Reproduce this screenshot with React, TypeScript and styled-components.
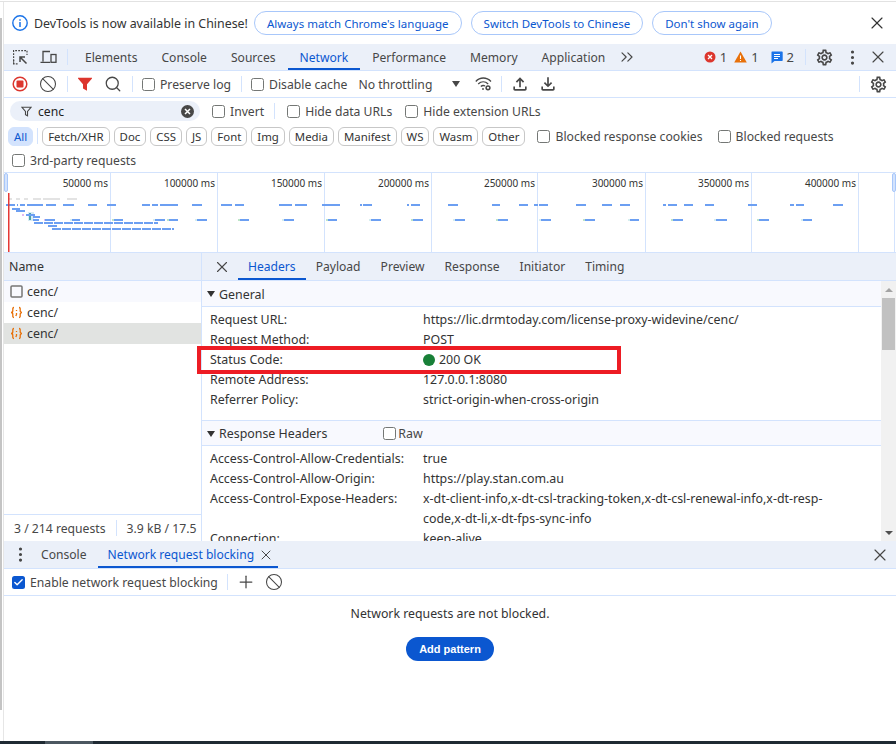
import React from 'react'
import styled, { createGlobalStyle } from 'styled-components'
import { X, Plus, Search, Ban, ChevronsRight, EllipsisVertical, Check } from 'lucide-react'
import { MdOutlineSettings, MdOutlineFileUpload, MdOutlineFileDownload } from 'react-icons/md'

const GlobalStyle = createGlobalStyle`
  html, body {
    margin: 0;
    padding: 0;
    background: #fff;
  }
  body {
    font-family: 'Noto Sans', 'Open Sans', sans-serif;
    font-size: 12px;
    color: #474747;
    overflow: hidden;
  }
`

const Page = styled.div`
  position: relative;
  width: 896px;
  height: 744px;
  display: flex;
  flex-direction: column;
  overflow: hidden;
  background: #fff;

  &::before {
    content: '';
    position: absolute;
    left: 0;
    top: 18px;
    width: 1.5px;
    height: 692px;
    background: #c4c4c4;
  }
`

const Frame = styled.div`
  flex: 1;
  min-height: 0;
  margin-top: 1px;
  padding-left: 3px;
  border-top: 1px solid #e2e2e2;
  display: flex;
  flex-direction: column;
`

const Content = styled.div`
  flex: 1;
  min-height: 0;
  display: flex;
  flex-direction: column;
  border-left: 1px solid #e6e6e6;
`

const BottomStrip = styled.div`
  height: 3px;
  flex: none;
  background: linear-gradient(to right, #1f2a33 45px, #4b5760 45px, #4b5760 93px, #1f2a33 93px);
`

const Infobar = styled.div`
  height: 42px;
  flex: none;
  display: flex;
  align-items: center;
  gap: 9px;
  padding: 0 9px 0 8px;
  box-sizing: border-box;
  font-size: 12.4px;
  color: #333;
`

const InfoText = styled.span`
  margin-left: -3px;
  width: 211px;
  white-space: nowrap;
`

const PillButton = styled.button`
  height: 24px;
  padding: 0 12px;
  border: 1px solid #a8c7fa;
  border-radius: 12px;
  background: #fff;
  color: #0b57d0;
  font: inherit;
  font-size: 11.5px;
  white-space: nowrap;
`

const CloseSlot = styled.span`
  margin-left: auto;
  display: flex;
  color: #333;
`

const TabBar = styled.div<{ $height?: number }>`
  height: ${(p) => p.$height ?? 27}px;
  flex: none;
  box-sizing: border-box;
  display: flex;
  align-items: stretch;
  padding-left: 2px;
  background: #ebf0f9;
  border-bottom: 1px solid #d3e3fd;
  font-size: 12.1px;
`

const Tab = styled.div<{ $active?: boolean; $pad?: string; $left?: number }>`
  margin-left: ${(p) => p.$left ?? 0}px;
  display: flex;
  align-items: center;
  white-space: nowrap;
  padding: ${(p) => p.$pad ?? '0 12px'};
  color: ${(p) => (p.$active ? '#0b57d0' : '#474747')};
  box-shadow: ${(p) => (p.$active ? 'inset 0 -2px 0 #0b57d0' : 'none')};
`

const IconSlot = styled.span<{ $width?: number; $left?: number; $color?: string }>`
  display: flex;
  align-items: center;
  justify-content: center;
  width: ${(p) => p.$width ?? 28}px;
  margin-left: ${(p) => p.$left ?? 0}px;
  color: ${(p) => p.$color ?? '#474747'};
  flex: none;
`

const Divider = styled.span<{ $left?: number; $right?: number; $auto?: boolean }>`
  width: 1px;
  height: 16px;
  align-self: center;
  flex: none;
  background: #d3e3fd;
  margin-left: ${(p) => (p.$auto ? 'auto' : `${p.$left ?? 0}px`)};
  margin-right: ${(p) => p.$right ?? 0}px;
`

const CountGroup = styled.div`
  margin-left: auto;
  display: flex;
  align-items: center;
  font-size: 13px;
`

const Badge = styled.span<{ $left?: number }>`
  display: flex;
  margin-left: ${(p) => p.$left ?? 0}px;
`

const Count = styled.span`
  margin-left: 4px;
`

const RightActions = styled.div`
  display: flex;
  align-items: stretch;
  padding-right: 4px;
`

const Toolbar = styled.div<{ $height?: number }>`
  height: ${(p) => p.$height ?? 27}px;
  flex: none;
  box-sizing: border-box;
  display: flex;
  align-items: center;
  padding: 0 4px 0 2px;
  border-bottom: 1px solid #d3e3fd;
  font-size: 12.2px;
  white-space: nowrap;
`

const Box = styled.span<{ $on?: boolean }>`
  width: 13px;
  height: 13px;
  box-sizing: border-box;
  flex: none;
  display: inline-flex;
  align-items: center;
  justify-content: center;
  border: ${(p) => (p.$on ? 'none' : '1px solid #747775')};
  border-radius: 2.5px;
  background: ${(p) => (p.$on ? '#0b57d0' : '#fff')};
  color: #fff;
`

const CheckLabel = styled.label<{ $left?: number }>`
  display: inline-flex;
  align-items: center;
  gap: 5px;
  margin-left: ${(p) => p.$left ?? 0}px;
  color: #474747;
`

const FilterInput = styled.div`
  width: 190px;
  height: 20px;
  margin-left: 6px;
  padding: 0 6px 0 11px;
  box-sizing: border-box;
  display: flex;
  align-items: center;
  gap: 6px;
  background: #ebf0f9;
  border-radius: 10px;
  color: #1f1f1f;
`

const ClearDot = styled.span`
  margin-left: auto;
  display: flex;
`

const FilterBlock = styled.div`
  flex: none;
  height: 75px;
  box-sizing: border-box;
  padding-top: 2px;
  display: flex;
  flex-direction: column;
  border-bottom: 1px solid #d3e3fd;
  font-size: 12.2px;
  white-space: nowrap;
`

const FilterRow = styled.div<{ $height: number; $left?: number; $bottom?: number }>`
  height: ${(p) => p.$height}px;
  flex: none;
  display: flex;
  align-items: center;
  padding-left: ${(p) => p.$left ?? 0}px;
  margin-bottom: ${(p) => p.$bottom ?? 0}px;
`

const Chip = styled.span<{ $active?: boolean }>`
  height: 19px;
  padding: 0 5px;
  box-sizing: border-box;
  display: inline-flex;
  align-items: center;
  margin-right: 4px;
  border-radius: 6px;
  font-size: 11.4px;
  border: 1px solid ${(p) => (p.$active ? '#d3e3fd' : '#c7c7c7')};
  background: ${(p) => (p.$active ? '#d3e3fd' : '#fff')};
  color: ${(p) => (p.$active ? '#0b57d0' : '#333')};
`

const Overview = styled.div`
  height: 80px;
  flex: none;
  box-sizing: border-box;
  border-bottom: 1px solid #d3e3fd;
  position: relative;
`

const Split = styled.div`
  height: 288px;
  flex: none;
  display: flex;
  overflow: hidden;
`

const NamePane = styled.div`
  width: 198px;
  flex: none;
  box-sizing: border-box;
  border-right: 1px solid #d3e3fd;
  display: flex;
  flex-direction: column;
`

const NameHeader = styled.div`
  height: 28px;
  flex: none;
  box-sizing: border-box;
  padding-left: 5px;
  display: flex;
  align-items: center;
  background: #ebf0f9;
  border-bottom: 1px solid #d3e3fd;
  font-size: 12.4px;
  color: #333;
`

const NameRow = styled.div<{ $bg: string }>`
  height: 21px;
  flex: none;
  display: flex;
  align-items: center;
  gap: 4px;
  padding-left: 6px;
  font-size: 12.4px;
  color: #333;
  background: ${(p) => p.$bg};
`

const NameSpacer = styled.div`
  flex: 1;
`

const NameFooter = styled.div`
  height: 27px;
  flex: none;
  box-sizing: border-box;
  display: flex;
  align-items: center;
  padding-left: 10px;
  border-top: 1px solid #d3e3fd;
  font-size: 12.2px;
  white-space: nowrap;
  overflow: hidden;
`

const DetailPane = styled.div`
  flex: 1;
  min-width: 0;
  display: flex;
  flex-direction: column;
`

const DetailBody = styled.div`
  flex: 1;
  min-height: 0;
  display: flex;
`

const Sections = styled.div`
  flex: 1;
  min-width: 0;
`

const SectionHeader = styled.div<{ $topLine?: boolean }>`
  height: 26px;
  box-sizing: border-box;
  display: flex;
  align-items: center;
  padding: 1px 0 0 5px;
  gap: 4px;
  background: #f8f9fe;
  border-bottom: 1px solid #d3e3fd;
  border-top: ${(p) => (p.$topLine ? '1px solid #d3e3fd' : 'none')};
  font-size: 12.4px;
  color: #333;
`

const Caret = styled.span`
  width: 0;
  height: 0;
  border-left: 4px solid transparent;
  border-right: 4px solid transparent;
  border-top: 6px solid #333;
`

const ThrottleCaret = styled(Caret)`
  margin-left: 20px;
  border-top-color: #474747;
`

const SectionBody = styled.div<{ $pad: string }>`
  padding: ${(p) => p.$pad};
`

const KV = styled.div`
  position: relative;
  display: grid;
  grid-template-columns: 213px 1fr;
  min-height: 20px;
  line-height: 20px;
  padding: 0 42px 0 8px;
  font-size: 12.4px;
  color: #333;
`

const KVValue = styled.span`
  word-break: break-word;
`

const StatusDot = styled.span`
  display: inline-block;
  width: 12px;
  height: 12px;
  margin-right: 4px;
  vertical-align: -1.5px;
  border-radius: 50%;
  background: #188038;
`

const Highlight = styled.div`
  position: absolute;
  left: -5px;
  width: 424px;
  top: -4px;
  height: 28px;
  box-sizing: border-box;
  border: 4.5px solid #ed1c24;
`

const RawCheck = styled.label`
  display: inline-flex;
  align-items: center;
  gap: 2px;
  margin-left: 52px;
  color: #474747;
`

const Scrollbar = styled.div`
  width: 15px;
  flex: none;
  display: flex;
  flex-direction: column;
  background: #f1f1f1;
`

const ScrollArrow = styled.div<{ $down?: boolean }>`
  height: 17px;
  flex: none;
  display: flex;
  align-items: center;
  justify-content: center;
  &::before {
    content: '';
    border-left: 4px solid transparent;
    border-right: 4px solid transparent;
    ${(p) => (p.$down ? 'border-top: 4px solid #505050;' : 'border-bottom: 4px solid #a3a3a3;')}
  }
`

const ScrollThumb = styled.div`
  height: 52px;
  flex: none;
  margin: 0 1px;
  background: #c1c1c1;
`

const ScrollTrack = styled.div`
  flex: 1;
`

const BlockingToolbar = styled(Toolbar)`
  padding-left: 8px;
`

const DrawerClose = styled(IconSlot)`
  margin-left: auto;
  margin-right: 2px;
`

const Empty = styled.div`
  flex: 1;
  min-height: 0;
  display: flex;
  flex-direction: column;
  align-items: center;
  padding-top: 9px;
  gap: 15px;
  font-size: 12.3px;
  color: #333;
`

const PrimaryButton = styled.button`
  width: 88px;
  height: 24px;
  border: none;
  border-radius: 12px;
  background: #0b57d0;
  color: #fff;
  font-family: 'Liberation Sans', Arial, sans-serif;
  font-size: 11px;
  font-weight: 700;
  padding: 0;
`

const InspectIcon = () => (
  <svg width="15" height="15" viewBox="0 0 15 15" fill="none" stroke="#474747" strokeWidth="1.2">
    <path d="M.6 14V.6H14V5" strokeDasharray="1.8 1.2" />
    <path d="M.6 10v3.800H5" strokeDasharray="1.8 1.2" />
    <path d="M13.500 13.500 7.500 7.500M7 12V7h5" strokeWidth="1.5" />
  </svg>
)

const DeviceIcon = () => (
  <svg width="17" height="14" viewBox="0 0 17 14" fill="none" stroke="#474747" strokeWidth="1.3">
    <path d="M10 1.500H3v10M.5 12.300H10" />
    <rect x="11" y="4.500" width="5" height="7.800" />
  </svg>
)

const RecordIcon = () => (
  <svg width="16" height="16" viewBox="0 0 16 16">
    <circle cx="8" cy="8" r="6.800" fill="none" stroke="#dc362e" strokeWidth="1.500" />
    <rect x="4.500" y="4.500" width="7" height="7" rx="1" fill="#dc362e" />
  </svg>
)

const FunnelIcon = ({ color, fill, size }: { color: string; fill: boolean; size: number }) => (
  <svg width={size} height={size} viewBox="0 0 14 14" fill={fill ? color : 'none'} stroke={color} strokeWidth="1.400">
    <path d="M1 1.500h12L8.300 7v5.500L5.700 11V7z" />
  </svg>
)

const WifiGearIcon = () => (
  <svg width="17" height="14" viewBox="0 0 17 14" fill="none" stroke="#474747" strokeWidth="1.300">
    <path d="M.8 4.500C5-.2 11.500-.2 16 4.500M3.200 7c3-2.800 7-2.800 10 0M5.800 9.500c1.300-1.100 3-1.200 4.300-.5" />
    <circle cx="13" cy="10.800" r="1.900" strokeWidth="1.500" />
    <circle cx="8" cy="12" r=".9" fill="#474747" stroke="none" />
  </svg>
)

const ErrorIcon = () => (
  <svg width="12" height="12" viewBox="0 0 12 12">
    <circle cx="6" cy="6" r="5.500" fill="#dc362e" />
    <path d="M4 4l4 4M8 4l-4 4" stroke="#fff" strokeWidth="1.300" />
  </svg>
)

const WarnIcon = () => (
  <svg width="13" height="12" viewBox="0 0 13 12">
    <path d="M6.500.5 12.800 11.500H.2z" fill="#e8710a" />
    <path d="M6.500 4.500v3.500M6.500 9v1" stroke="#fff" strokeWidth="1.100" />
  </svg>
)

const MessageIcon = () => (
  <svg width="12" height="13" viewBox="0 0 12 13">
    <path d="M1 .5h10a.7.7 0 0 1 .7.7v8a.7.7 0 0 1-.7.7H3.500L.5 12.500V1.200A.7.7 0 0 1 1 .5z" fill="#1a73e8" />
    <path d="M3 3.500h6M3 5.500h6M3 7.500h4" stroke="#fff" strokeWidth="1" />
  </svg>
)

const InfoIcon = () => (
  <svg width="16" height="16" viewBox="0 0 16 16">
    <circle cx="8" cy="8" r="7.200" fill="none" stroke="#1a73e8" strokeWidth="1.400" />
    <path d="M8 7v5M8 4.200v1.500" stroke="#1a73e8" strokeWidth="1.500" />
  </svg>
)

const ClearIcon = () => (
  <svg width="13" height="13" viewBox="0 0 13 13">
    <circle cx="6.500" cy="6.500" r="6.500" fill="#474747" />
    <path d="M4 4l5 5M9 4l-5 5" stroke="#fff" strokeWidth="1.500" />
  </svg>
)

const JsonIcon = () => (
  <svg width="13" height="13" viewBox="0 0 13 13" fill="none" stroke="#e8710a" strokeWidth="1.300">
    <path d="M4 1.500C2.500 1.500 2.800 3 2.800 4.500S2.500 6.500 1 6.500c1.500 0 1.800.5 1.800 2s-.3 3 1.200 3" />
    <path d="M9 1.500c1.500 0 1.200 1.500 1.200 3s.3 2 1.800 2c-1.500 0-1.800.5-1.800 2s.3 3-1.200 3" />
    <path d="M6.500 4v1M6.500 7v1.500L5.800 10" />
  </svg>
)

const DocIcon = () => (
  <svg width="13" height="13" viewBox="0 0 13 13" fill="none" stroke="#757575" strokeWidth="1.500">
    <rect x="1" y="1" width="11" height="11" rx="1" />
  </svg>
)

const gridLines = [110, 217, 324, 431, 537, 645, 751, 858]
const gridLabels = ['50000', '100000', '150000', '200000', '250000', '300000', '350000', '400000']

// waterfall bars: [row y, from x, to x]
const bars: [number, number, number][] = [
  [25, 6, 15], [25, 17, 18], [25, 20, 25], [25, 27, 43], [25, 46, 56], [25, 63, 74], [25, 88, 97],
  [25, 107, 116], [25, 142, 150], [25, 152, 158], [25, 160, 178], [25, 192, 202], [25, 221, 232], [25, 235, 244],
  [25, 279, 292], [25, 295, 307], [25, 322, 340], [25, 360, 362], [25, 363, 372], [25, 407, 409], [25, 411, 420],
  [25, 448, 458], [25, 492, 500], [25, 519, 528], [25, 534, 538], [25, 539, 548], [25, 576, 586],
  [25, 602, 612], [25, 620, 630], [25, 663, 666], [25, 668, 677], [25, 684, 693], [25, 705, 714],
  [25, 748, 757], [25, 790, 794], [25, 796, 804], [25, 833, 843],
  [29, 12, 20], [31, 16, 25], [35, 26, 35], [37, 33, 40],
  [40, 33, 39], [40, 45, 55], [40, 72, 80], [40, 114, 123], [40, 155, 165], [40, 169, 178], [40, 197, 207],
  [40, 240, 249], [40, 284, 294], [40, 328, 337], [40, 371, 381], [40, 413, 423], [40, 455, 465], [40, 498, 508],
  [40, 541, 551], [40, 585, 595], [40, 630, 639], [40, 673, 683], [40, 716, 727], [40, 759, 769], [40, 803, 812],
  [46, 48, 57],
]

const longBars: [number, number, number][] = [
  [43, 34, 158],
  [49, 52, 174],
]

const greyBars: [number, number][] = [[8, 12], [16, 20], [24, 28], [33, 41], [43, 60], [67, 77]]

const OverviewChart = () => (
  <svg width="892" height="79" viewBox="0 0 892 79">
    {gridLines.map((x) => (
      <line key={x} x1={x - 3.5} x2={x - 3.5} y1="0" y2="79" stroke="#d3e3fd" />
    ))}
    {greyBars.map(([a, b]) => (
      <rect key={a} x={a - 4} y="25" width={b - a} height="2" fill="#e3e3e3" />
    ))}
    <rect x="24" y="39" width="6" height="9" fill="#d8ecf5" />
    <rect x="25" y="40" width="2" height="7" fill="#4aa3a8" />
    <rect x="18" y="41" width="2" height="2" fill="#e3b8f0" />
    <rect x="40" y="46" width="2" height="2" fill="#e3b8f0" />
    {bars.map(([y, a, b], i) => (
      <rect key={i} x={a - 4} y={y + 6} width={b - a} height="2" fill="#6c9ff2" />
    ))}
    {bars
      .filter(([y, a]) => y === 40 && a > 60)
      .map(([, a], i) => (
        <rect key={a} x={a - 6} y="46" width="2" height="2" fill={i % 2 ? '#bde5c8' : '#d5eef0'} />
      ))}
    {longBars.map(([y, a, b]) => (
      <line key={y} x1={a - 4} x2={b - 4} y1={y + 7} y2={y + 7} stroke="#6c9ff2" strokeWidth="2" strokeDasharray="9 1" />
    ))}
    <rect x="4" y="20" width="1.500" height="59" fill="#e53935" />
    <rect x="890" y="0" width="1" height="79" fill="#d3e3fd" />
  </svg>
)

const AxisLabels = styled.div`
  position: absolute;
  top: 2px;
  left: 0;
  right: 0;
  font-size: 10px;
  color: #333;
`

const AxisLabel = styled.span<{ $right: number }>`
  position: absolute;
  right: ${(p) => p.$right}px;
  line-height: 16px;
  white-space: nowrap;
`

const Handle = styled.div<{ $side: 'left' | 'right' }>`
  position: absolute;
  top: 0;
  ${(p) => p.$side}: 0;
  width: 4px;
  height: 19px;
  background: #d3e3fd;
  border: 1px solid #a8c7fa;
  box-sizing: border-box;
  border-radius: 2px;
`

const filters = ['Fetch/XHR', 'Doc', 'CSS', 'JS', 'Font', 'Img', 'Media', 'Manifest', 'WS', 'Wasm', 'Other']

const detailTabs = ['Payload', 'Preview', 'Response', 'Initiator', 'Timing']

const App: React.FC = () => {
  return (
    <Page>
      <GlobalStyle />
      <Frame>
        <Content>
          <Infobar>
            <InfoIcon />
            <InfoText>DevTools is now available in Chinese!</InfoText>
            <PillButton>Always match Chrome's language</PillButton>
            <PillButton>Switch DevTools to Chinese</PillButton>
            <PillButton>Don't show again</PillButton>
            <CloseSlot>
              <X size={20} strokeWidth={1.4} />
            </CloseSlot>
          </Infobar>

          <TabBar>
            <IconSlot>
              <InspectIcon />
            </IconSlot>
            <IconSlot>
              <DeviceIcon />
            </IconSlot>
            <Divider $left={5} />
            <Tab $left={5}>Elements</Tab>
            <Tab>Console</Tab>
            <Tab>Sources</Tab>
            <Tab $active>Network</Tab>
            <Tab>Performance</Tab>
            <Tab>Memory</Tab>
            <Tab>Application</Tab>
            <IconSlot $width={20}>
              <ChevronsRight size={24} strokeWidth={1.4} />
            </IconSlot>
            <CountGroup>
              <ErrorIcon />
              <Count>1</Count>
              <Badge $left={7}>
                <WarnIcon />
              </Badge>
              <Count>1</Count>
              <Badge $left={12}>
                <MessageIcon />
              </Badge>
              <Count>2</Count>
            </CountGroup>
            <Divider $left={11} $right={4} />
            <RightActions>
              <IconSlot>
                <MdOutlineSettings size={19} />
              </IconSlot>
              <IconSlot>
                <EllipsisVertical size={19} strokeWidth={2} />
              </IconSlot>
              <IconSlot $left={-2}>
                <X size={20} strokeWidth={1.4} />
              </IconSlot>
            </RightActions>
          </TabBar>

          <Toolbar>
            <IconSlot>
              <RecordIcon />
            </IconSlot>
            <IconSlot>
              <Ban size={18} strokeWidth={1.4} />
            </IconSlot>
            <Divider $left={5} $right={3} />
            <IconSlot>
              <FunnelIcon color="#dc362e" fill size={14} />
            </IconSlot>
            <IconSlot>
              <Search size={18} strokeWidth={1.7} />
            </IconSlot>
            <Divider $left={5} />
            <CheckLabel $left={9}>
              <Box />
              Preserve log
            </CheckLabel>
            <Divider $left={10} />
            <CheckLabel $left={9}>
              <Box />
              Disable cache
            </CheckLabel>
            <CheckLabel $left={11}>No throttling</CheckLabel>
            <ThrottleCaret />
            <IconSlot $left={9}>
              <WifiGearIcon />
            </IconSlot>
            <Divider $left={4} $right={4} />
            <IconSlot>
              <MdOutlineFileUpload size={20} />
            </IconSlot>
            <IconSlot>
              <MdOutlineFileDownload size={20} />
            </IconSlot>
            <Divider $auto $right={4} />
            <IconSlot>
              <MdOutlineSettings size={19} />
            </IconSlot>
          </Toolbar>

          <FilterBlock>
            <FilterRow $height={22} $bottom={2}>
              <FilterInput>
                <FunnelIcon color="#474747" fill={false} size={11} />
                cenc
                <ClearDot>
                  <ClearIcon />
                </ClearDot>
              </FilterInput>
              <CheckLabel $left={12}>
                <Box />
                Invert
              </CheckLabel>
              <Divider $left={10} />
              <CheckLabel $left={12}>
                <Box />
                Hide data URLs
              </CheckLabel>
              <CheckLabel $left={13}>
                <Box />
                Hide extension URLs
              </CheckLabel>
            </FilterRow>
            <FilterRow $height={24} $left={4}>
              <Chip $active>All</Chip>
              <Divider $right={4} />
              {filters.map((f) => (
                <Chip key={f}>{f}</Chip>
              ))}
              <CheckLabel $left={8}>
                <Box />
                Blocked response cookies
              </CheckLabel>
              <CheckLabel $left={15}>
                <Box />
                Blocked requests
              </CheckLabel>
            </FilterRow>
            <FilterRow $height={24} $left={8}>
              <CheckLabel>
                <Box />
                3rd-party requests
              </CheckLabel>
            </FilterRow>
          </FilterBlock>

          <Overview>
            <OverviewChart />
            <AxisLabels>
              {gridLabels.map((l, i) => (
                <AxisLabel key={l} $right={896 - gridLines[i] + 2}>
                  {l} ms
                </AxisLabel>
              ))}
            </AxisLabels>
            <Handle $side="left" />
            <Handle $side="right" />
          </Overview>

          <Split>
            <NamePane>
              <NameHeader>Name</NameHeader>
              <NameRow $bg="#f8f9fe">
                <DocIcon />
                cenc/
              </NameRow>
              <NameRow $bg="#fff">
                <JsonIcon />
                cenc/
              </NameRow>
              <NameRow $bg="#e1e3e1">
                <JsonIcon />
                cenc/
              </NameRow>
              <NameSpacer />
              <NameFooter>
                3 / 214 requests
                <Divider $left={10} $right={10} />
                3.9 kB / 17.5
              </NameFooter>
            </NamePane>
            <DetailPane>
              <TabBar $height={28}>
                <IconSlot $left={4}>
                  <X size={18} strokeWidth={1.5} />
                </IconSlot>
                <Tab $active $pad="0 10px" $left={2}>
                  Headers
                </Tab>
                {detailTabs.map((t) => (
                  <Tab key={t} $pad="0 10px">
                    {t}
                  </Tab>
                ))}
              </TabBar>
              <DetailBody>
                <Sections>
                  <SectionHeader>
                    <Caret />
                    General
                  </SectionHeader>
                  <SectionBody $pad="3px 0 10px">
                    <KV>
                      <span>Request URL:</span>
                      <KVValue>https://lic.drmtoday.com/license-proxy-widevine/cenc/</KVValue>
                    </KV>
                    <KV>
                      <span>Request Method:</span>
                      <KVValue>POST</KVValue>
                    </KV>
                    <KV>
                      <span>Status Code:</span>
                      <KVValue>
                        <StatusDot />
                        200 OK
                      </KVValue>
                      <Highlight />
                    </KV>
                    <KV>
                      <span>Remote Address:</span>
                      <KVValue>127.0.0.1:8080</KVValue>
                    </KV>
                    <KV>
                      <span>Referrer Policy:</span>
                      <KVValue>strict-origin-when-cross-origin</KVValue>
                    </KV>
                  </SectionBody>
                  <SectionHeader $topLine>
                    <Caret />
                    Response Headers
                    <RawCheck>
                      <Box />
                      Raw
                    </RawCheck>
                  </SectionHeader>
                  <SectionBody $pad="3px 0 0">
                    <KV>
                      <span>Access-Control-Allow-Credentials:</span>
                      <KVValue>true</KVValue>
                    </KV>
                    <KV>
                      <span>Access-Control-Allow-Origin:</span>
                      <KVValue>https://play.stan.com.au</KVValue>
                    </KV>
                    <KV>
                      <span>Access-Control-Expose-Headers:</span>
                      <KVValue>
                        x-dt-client-info,x-dt-csl-tracking-token,x-dt-csl-renewal-info,x-dt-resp-code,x-dt-li,x-dt-fps-sync-info
                      </KVValue>
                    </KV>
                    <KV>
                      <span>Connection:</span>
                      <KVValue>keep-alive</KVValue>
                    </KV>
                  </SectionBody>
                </Sections>
                <Scrollbar>
                  <ScrollArrow />
                  <ScrollThumb />
                  <ScrollTrack />
                  <ScrollArrow $down />
                </Scrollbar>
              </DetailBody>
            </DetailPane>
          </Split>

          <TabBar $height={28}>
            <IconSlot>
              <EllipsisVertical size={19} strokeWidth={2} />
            </IconSlot>
            <Tab $pad="0 11px 0 10px" $left={-3}>
              Console
            </Tab>
            <Tab $active $pad="0 0 0 10px">
              Network request blocking
              <IconSlot $width={24} $color="#474747">
                <X size={16} strokeWidth={1.5} />
              </IconSlot>
            </Tab>
            <DrawerClose>
              <X size={20} strokeWidth={1.4} />
            </DrawerClose>
          </TabBar>
          <BlockingToolbar>
            <CheckLabel>
              <Box $on>
                <Check size={11} strokeWidth={3} />
              </Box>
              Enable network request blocking
            </CheckLabel>
            <Divider $left={9} $right={4} />
            <IconSlot>
              <Plus size={20} strokeWidth={1.5} />
            </IconSlot>
            <IconSlot>
              <Ban size={18} strokeWidth={1.4} />
            </IconSlot>
          </BlockingToolbar>
          <Empty>
            <span>Network requests are not blocked.</span>
            <PrimaryButton>Add pattern</PrimaryButton>
          </Empty>
        </Content>
      </Frame>
      <BottomStrip />
    </Page>
  )
}

export default App
